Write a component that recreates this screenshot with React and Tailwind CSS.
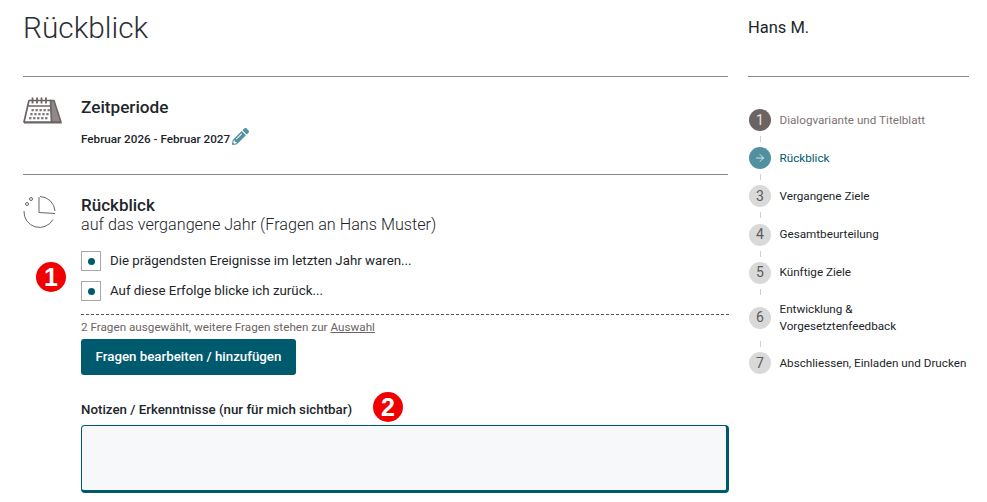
import { ArrowRight } from 'lucide-react';
import { FaPencilAlt } from 'react-icons/fa';

const steps = [
  { n: '1', label: 'Dialogvariante und Titelblatt', state: 'done' },
  { n: '→', label: 'Rückblick', state: 'active' },
  { n: '3', label: 'Vergangene Ziele' },
  { n: '4', label: 'Gesamtbeurteilung' },
  { n: '5', label: 'Künftige Ziele' },
  { n: '6', label: 'Entwicklung &\nVorgesetztenfeedback', tall: true },
  { n: '7', label: 'Abschliessen, Einladen und Drucken', last: true },
];

const questions = [
  'Die prägendsten Ereignisse im letzten Jahr waren...',
  'Auf diese Erfolge blicke ich zurück...',
];

function CalendarIcon() {
  return (
    <svg width="39" height="28" viewBox="0 0 39 28" className="block">
      <path d="M27 3.500h4l7 21.500H28z" fill="#8f8a89" stroke="#6b6463" strokeWidth="1.500" strokeLinejoin="round" />
      <path d="M6 3.500h21.500l1 21.500H1z" fill="#fff" stroke="#6b6463" strokeWidth="1.700" strokeLinejoin="round" />
      <path d="M5 9h23" stroke="#6b6463" strokeWidth="1.500" />
      <path d="M1 25h37.500l.3 1.500H1z" fill="#6b6463" />
      {[9.500, 14, 18.500, 23].map(x => (
        <path key={x} d={`M${x} 0.500v6`} stroke="#6b6463" strokeWidth="1.800" />
      ))}
      {[12, 16, 20].map((y, r) =>
        [8.500, 12.500, 16.500, 20.500, 24.500].map((x, c) => (
          <rect key={`${r}${c}`} x={x - r * 1.200} y={y} width="2.300" height="2.300" fill="#7d7877" />
        ))
      )}
    </svg>
  );
}

function PieIcon() {
  return (
    <svg width="34" height="36" viewBox="0 0 34 36" fill="none" stroke="#6b6463" className="block">
      <path d="M17 1.500a15.500 15.500 0 0 1 15 14.500M16 2v15.500l16 1" strokeWidth="1" />
      <path d="M1 16a15.500 15.500 0 0 0 29 8.500" strokeWidth="1" />
      <circle cx="8" cy="4" r="1.500" strokeWidth="1" />
      <circle cx="4" cy="9" r="1.500" strokeWidth="1" />
    </svg>
  );
}

function Badge({ n, className }) {
  return (
    <div className={`w-[30px] h-[30px] rounded-full bg-[#f00000] text-white flex items-center justify-center font-['Liberation_Sans',sans-serif] font-bold text-[25px] leading-none ${className}`}>
      {n}
    </div>
  );
}

function Step({ step }) {
  const circle =
    step.state === 'done'
      ? 'bg-[#6b6463] text-[#e8e6e6]'
      : step.state === 'active'
      ? 'bg-[#52909f] text-white'
      : 'bg-[#d9d9d9] text-[#5f5a59]';
  const text =
    step.state === 'done'
      ? 'text-[#7c7473]'
      : step.state === 'active'
      ? 'text-[#005a6e]'
      : 'text-[#22262b]';
  return (
    <div className="flex flex-col">
      <div className={`flex items-center gap-[8.5px] ml-px ${step.tall ? 'my-px' : ''}`}>
        <div className={`w-[22px] h-[22px] shrink-0 rounded-full flex items-center justify-center text-[14px] ${circle}`}>
          {step.state === 'active' ? <ArrowRight size={12} strokeWidth={1.5} /> : step.n}
        </div>
        <div className={`text-[11.7px] leading-[17px] whitespace-pre-line ${text}`}>{step.label}</div>
      </div>
      {!step.last && <div className="w-px h-[6px] bg-[#d0d0d0] ml-[12px] my-[5.1px]" />}
    </div>
  );
}

export default function App() {
  return (
    <div className="h-[502px] overflow-hidden bg-white font-['Roboto',sans-serif] text-[#22262b] flex pl-[23px] gap-[20px]">
      <div className="w-[705px] shrink-0 relative">
        <h1 className="text-[29.8px] leading-[36px] font-light text-[#2b2f33] mt-[10px]">Rückblick</h1>
        <div className="h-px bg-[#8a8a8a] mt-[30px]" />

        <div className="flex mt-[19px]">
          <div className="w-[58px] shrink-0 pt-px"><CalendarIcon /></div>
          <div>
            <div className="text-[17.2px] leading-[22px] font-medium">Zeitperiode</div>
            <div className="flex items-center mt-[11px] h-[22px]">
              <span className="text-[11.7px] font-medium">Februar 2026 - Februar 2027</span>
              <FaPencilAlt size={17} color="#52909f" className="ml-[2px] mb-[7px]" />
            </div>
          </div>
        </div>
        <div className="h-px bg-[#8a8a8a] mt-[23px]" />

        <div className="flex mt-[19px]">
          <div className="w-[58px] shrink-0 pt-px"><PieIcon /></div>
          <div className="flex-1">
            <div className="text-[17px] leading-[22px] font-medium">Rückblick</div>
            <div className="text-[16.2px] leading-[18px] font-light">auf das vergangene Jahr (Fragen an Hans Muster)</div>
            <div className="flex flex-col gap-[10px] mt-[17px]">
              {questions.map(q => (
                <div key={q} className="flex items-center gap-[9px]">
                  <div className="w-[20px] h-[20px] border border-[#a8a8a8] flex items-center justify-center">
                    <div className="w-[7px] h-[7px] rounded-full bg-[#005a6e]" />
                  </div>
                  <span className="text-[13.3px]">{q}</span>
                </div>
              ))}
            </div>
            <div className="border-t border-dashed border-[#555] mt-[13px] pt-[5px] text-[11.7px] leading-[14px] text-[#6b6463]">
              2 Fragen ausgewählt, weitere Fragen stehen zur <span className="underline">Auswahl</span>
            </div>
            <button className="mt-[5px] h-[36px] w-[215px] bg-[#005a6e] text-white text-[13.3px] font-medium rounded-[3px] block">
              Fragen bearbeiten / hinzufügen
            </button>
            <div className="flex items-center mt-[20px] h-[30px]">
              <span className="text-[13.3px] font-medium">Notizen / Erkenntnisse (nur für mich sichtbar)</span>
              <Badge n="2" className="ml-[21px] mb-[6px]" />
            </div>
            <div className="h-[68px] w-[648px] bg-[#f7f8fa] border border-[#005a6e] border-r-[3px] border-b-[3px] rounded-[4px]" />
          </div>
        </div>
        <Badge n="1" className="absolute left-[13px] top-[262px]" />
      </div>

      <div className="w-[221px] shrink-0">
        <div className="text-[16.5px] leading-[20px] mt-[18px]">Hans M.</div>
        <div className="h-px bg-[#8a8a8a] mt-[38px]" />
        <div className="mt-[32px] flex flex-col">
          {steps.map(s => <Step key={s.n} step={s} />)}
        </div>
      </div>
    </div>
  );
}
